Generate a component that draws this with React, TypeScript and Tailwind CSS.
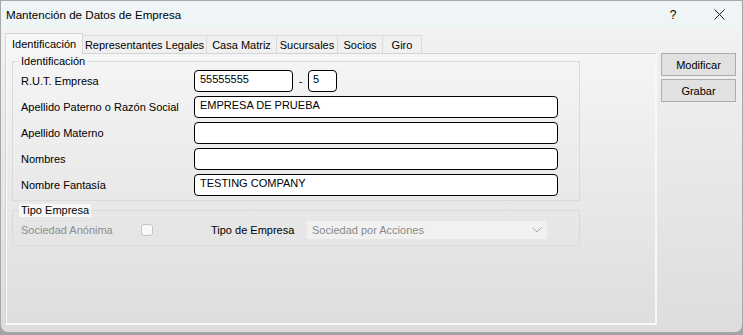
import React from "react";

const tabs = [
  { label: "Identificación", w: "w-[78px]", active: true },
  { label: "Representantes Legales", w: "w-[124px]" },
  { label: "Casa Matriz", w: "w-[70px]" },
  { label: "Sucursales", w: "w-[61px]" },
  { label: "Socios", w: "w-[45px]" },
  { label: "Giro", w: "w-[39px]" },
];

function Field({ label, value, children }: { label: string; value?: string; children?: React.ReactNode }) {
  return (
    <div className="flex items-center h-[22px]">
      <span className="w-[181px] pl-[8px] leading-[14px]">{label}</span>
      {children ?? (
        <div className="w-[364px] h-[22px] border border-black rounded-[4px] bg-white pl-[5px] pt-[1px] leading-[15px] text-[11px]">
          {value}
        </div>
      )}
    </div>
  );
}

export default function App() {
  return (
    <div className="w-[743px] h-[335px] bg-[#a3a3a3] font-['Liberation_Sans',Arial,sans-serif] text-[11px] text-black">
      <div className="h-[333px] flex flex-col border border-[#a9a9a9] rounded-b-[8px] overflow-hidden bg-linear-to-b from-[#f4f4f4] to-[#dddddd]">
        {/* Title bar */}
        <div className="h-[27px] flex items-center bg-[#eff4f7] shrink-0">
          <span className="pl-[5px] text-[11.6px] flex-1">Mantención de Datos de Empresa</span>
          <div className="w-[46px] h-full flex items-center justify-center text-[12px]">?</div>
          <div className="w-[46px] h-full flex items-center justify-center">
            <svg width="11" height="11" viewBox="0 0 11 11">
              <path d="M0.5 0.5 L10.5 10.5 M10.5 0.5 L0.5 10.5" stroke="#1a1a1a" strokeWidth="1" />
            </svg>
          </div>
        </div>

        {/* Body */}
        <div className="flex-1 flex pl-[4px] pt-[5px]">
          <div className="w-[652px] flex flex-col">
            {/* Tabs */}
            <div className="flex items-end h-[20px] whitespace-nowrap">
              {tabs.map((t) =>
                t.active ? (
                  <div
                    key={t.label}
                    className={`${t.w} h-[21px] -mb-px relative z-10 border border-b-0 border-[#d6d6d6] bg-[#f7f7f7] pl-[6px] pt-[3px] leading-[14px]`}
                  >
                    {t.label}
                  </div>
                ) : (
                  <div
                    key={t.label}
                    className={`${t.w} h-[18px] border border-b-0 border-l-0 border-[#d9d9d9] bg-[#f0f0f0] pt-[2px] leading-[14px] text-center overflow-hidden`}
                  >
                    {t.label}
                  </div>
                )
              )}
            </div>

            {/* Tab panel */}
            <div className="h-[272px] border-l border-t border-[#d3d3d3] border-r-2 border-b-2 border-r-[#f8f8f8] border-b-[#f8f8f8] shadow-[inset_1px_0_0_#fafafa] bg-linear-to-b from-[#f5f5f5] to-[#dedede] pl-[6px]">
              <fieldset className="w-[568px] border border-[#dadada] pb-[4px] pt-[2px]">
                <legend className="ml-[6px] px-[2px] leading-[14px]">Identificación</legend>
                <div className="flex flex-col gap-[4px]">
                  <Field label="R.U.T. Empresa">
                    <div className="flex items-center">
                      <div className="w-[99px] h-[22px] border border-black rounded-[4px] bg-white pl-[5px] pt-[1px] leading-[15px]">
                        55555555
                      </div>
                      <span className="w-[15px] text-center">-</span>
                      <div className="w-[29px] h-[22px] border border-black rounded-[4px] bg-white pl-[4px] pt-[1px] leading-[15px]">
                        5
                      </div>
                    </div>
                  </Field>
                  <Field label="Apellido Paterno o Razón Social" value="EMPRESA DE PRUEBA" />
                  <Field label="Apellido Materno" value="" />
                  <Field label="Nombres" value="" />
                  <Field label="Nombre Fantasía" value="TESTING COMPANY" />
                </div>
              </fieldset>

              <fieldset className="w-[568px] mt-[3px] border border-[#dadada] pt-[3px] pb-[5px]">
                <legend className="ml-[6px] px-[2px] leading-[13px] bg-[#f8f8f8]">Tipo Empresa</legend>
                <div className="flex items-center h-[20px] pl-[8px]">
                  <span className="w-[120px] text-[#8d8d8d]">Sociedad Anónima</span>
                  <span className="w-[12px] h-[12px] rounded-[3px] border border-[#c4c4c4] bg-[#f9f9f9]" />
                  <span className="ml-[58px] w-[95px]">Tipo de Empresa</span>
                  <div className="w-[242px] h-[20px] bg-[#f1f1f1] border border-[#e6e6e6] flex items-center justify-between pl-[5px] pr-[5px] text-[#8a8a8a]">
                    <span>Sociedad por Acciones</span>
                    <svg width="10" height="6" viewBox="0 0 10 6">
                      <path d="M0.5 0.5 L5 5 L9.5 0.5" fill="none" stroke="#a8a8a8" strokeWidth="1" />
                    </svg>
                  </div>
                </div>
              </fieldset>
            </div>
          </div>

          {/* Buttons */}
          <div className="ml-[4px] mt-[20px] w-[75px] flex flex-col gap-[3px]">
            <button className="h-[23px] border border-[#adadad] bg-[#e1e1e1] leading-[14px]">Modificar</button>
            <button className="h-[23px] border border-[#adadad] bg-[#e1e1e1] leading-[14px]">Grabar</button>
          </div>
        </div>
      </div>
    </div>
  );
}
